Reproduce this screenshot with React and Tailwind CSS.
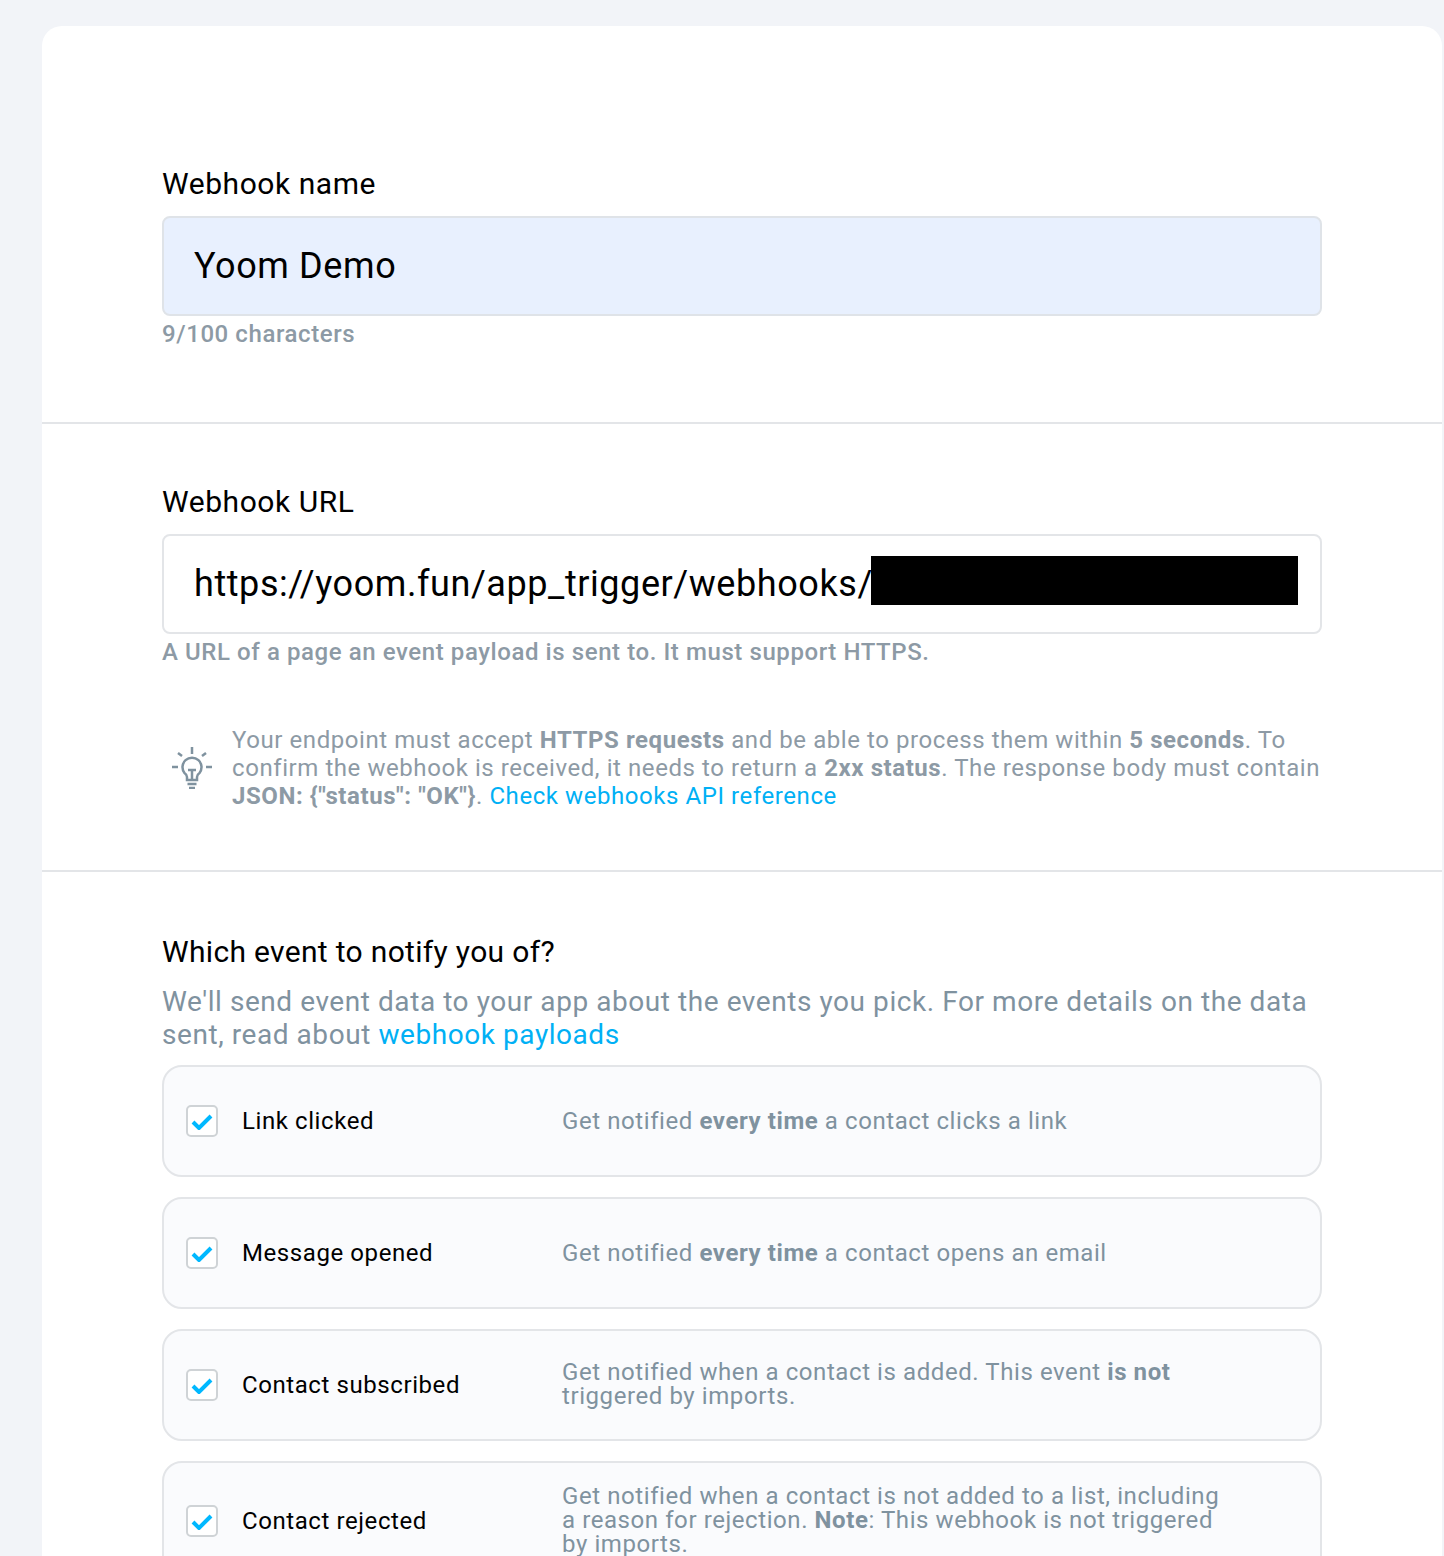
const font = "font-['Roboto',sans-serif]"

function Bulb() {
  return (
    <svg width="40" height="42" viewBox="0 0 40 42" fill="none" stroke="#7f929f" strokeWidth="2.500" className="shrink-0">
      <path d="M20 0v7M0 20h6M34 20h6M6 6l4 3M34 6l-4 3" />
      <path d="M15 33v-3c0-2-1-3-2.500-4a9.500 9.500 0 1 1 15 0c-1.500 1-2.500 2-2.500 4v3z" />
      <path d="M16 23h8M20 23v10M15.500 37h9M17 41h6" />
    </svg>
  )
}

function Check() {
  return (
    <span className="flex h-8 w-8 shrink-0 items-center justify-center rounded-[5px] border-2 border-[#cfd3d6] bg-white">
      <svg width="22" height="18" viewBox="0 0 22 18" fill="none" stroke="#00b8ff" strokeWidth="4">
        <path d="M2 10l6 6L20 4" />
      </svg>
    </span>
  )
}

function EventRow({ title, height, multiline, children }) {
  return (
    <div className={`flex items-center rounded-[20px] border-2 border-[#e3e5e8] bg-[#fafbfd] pl-[22px] ${height}`}>
      <Check />
      <div className="ml-6 w-[320px] shrink-0 text-[24px] tracking-[0.58px] text-black">{title}</div>
      <div className={`w-[670px] text-[24px] leading-6 tracking-[0.58px] text-[#7f929f] ${multiline ? 'mb-[2px]' : ''}`}>{children}</div>
    </div>
  )
}

export default function App() {
  return (
    <div className={`h-[1556px] overflow-hidden bg-[#f2f4f8] pl-[42px] pr-[2px] pt-[26px] ${font}`}>
      <div className="min-h-[1600px] rounded-t-[20px] bg-white">
        <section className="h-[398px] border-b-2 border-[#e3e5e8] px-[120px] pt-[140px]">
          <label className="block text-[30px] leading-9 tracking-[0.55px] text-black">Webhook name</label>
          <div className="mt-[14px] flex h-[100px] items-center rounded-lg border-2 border-[#dfe3e8] bg-[#e8f0fe] px-[30px] text-[36px] tracking-[0.6px] text-black">
            Yoom Demo
          </div>
          <p className="mt-[4px] text-[24px] font-medium leading-7 tracking-[0.58px] text-[#8d9aa5]">9/100 characters</p>
        </section>

        <section className="h-[448px] border-b-2 border-[#e3e5e8] px-[120px] pt-[60px]">
          <label className="block text-[30px] leading-9 tracking-[0.55px] text-black">Webhook URL</label>
          <div className="mt-[14px] flex h-[100px] items-center rounded-lg border-2 border-[#e3e5e8] bg-white pl-[30px] text-[36px] tracking-[0.57px] text-black">
            <span>https://yoom.fun/app_trigger/webhooks/</span>
            <span className="mb-2 ml-[-2px] h-[49px] w-[427px] bg-black" />
          </div>
          <p className="mt-[4px] text-[24px] font-medium leading-7 tracking-[0.58px] text-[#8d9aa5]">
            A URL of a page an event payload is sent to. It must support HTTPS.
          </p>
          <div className="mt-[60px] flex items-center">
            <div className="ml-[10px] w-[60px] shrink-0"><Bulb /></div>
            <p className="text-[24px] leading-7 tracking-[0.57px] text-[#8d9aa5]">
              Your endpoint must accept <b>HTTPS requests</b> and be able to process them within <b>5 seconds</b>. To
              confirm the webhook is received, it needs to return a <b>2xx status</b>. The response body must contain{' '}
              <b>JSON: {'{"status": "OK"}'}</b>. <span className="text-[#00b0f5]">Check webhooks API reference</span>
            </p>
          </div>
        </section>

        <section className="px-[120px] pt-[62px]">
          <h2 className="text-[30px] font-normal leading-9 tracking-[0.32px] text-black">Which event to notify you of?</h2>
          <p className="mt-[15px] text-[28px] leading-[33px] tracking-[0.56px] text-[#7f929f]">
            We'll send event data to your app about the events you pick. For more details on the data sent, read about{' '}
            <span className="text-[#00b0f5]">webhook payloads</span>
          </p>
          <div className="mt-[14px] flex flex-col gap-5">
            <EventRow title="Link clicked" height="h-[112px]">Get notified <b>every time</b> a contact clicks a link</EventRow>
            <EventRow title="Message opened" height="h-[112px]">Get notified <b>every time</b> a contact opens an email</EventRow>
            <EventRow title="Contact subscribed" height="h-[112px]" multiline>Get notified when a contact is added. This event <b>is not</b> triggered by imports.</EventRow>
            <EventRow title="Contact rejected" height="h-[120px]" multiline>Get notified when a contact is not added to a list, including a reason for rejection. <b>Note</b>: This webhook is not triggered by imports.</EventRow>
          </div>
        </section>
      </div>
    </div>
  )
}
